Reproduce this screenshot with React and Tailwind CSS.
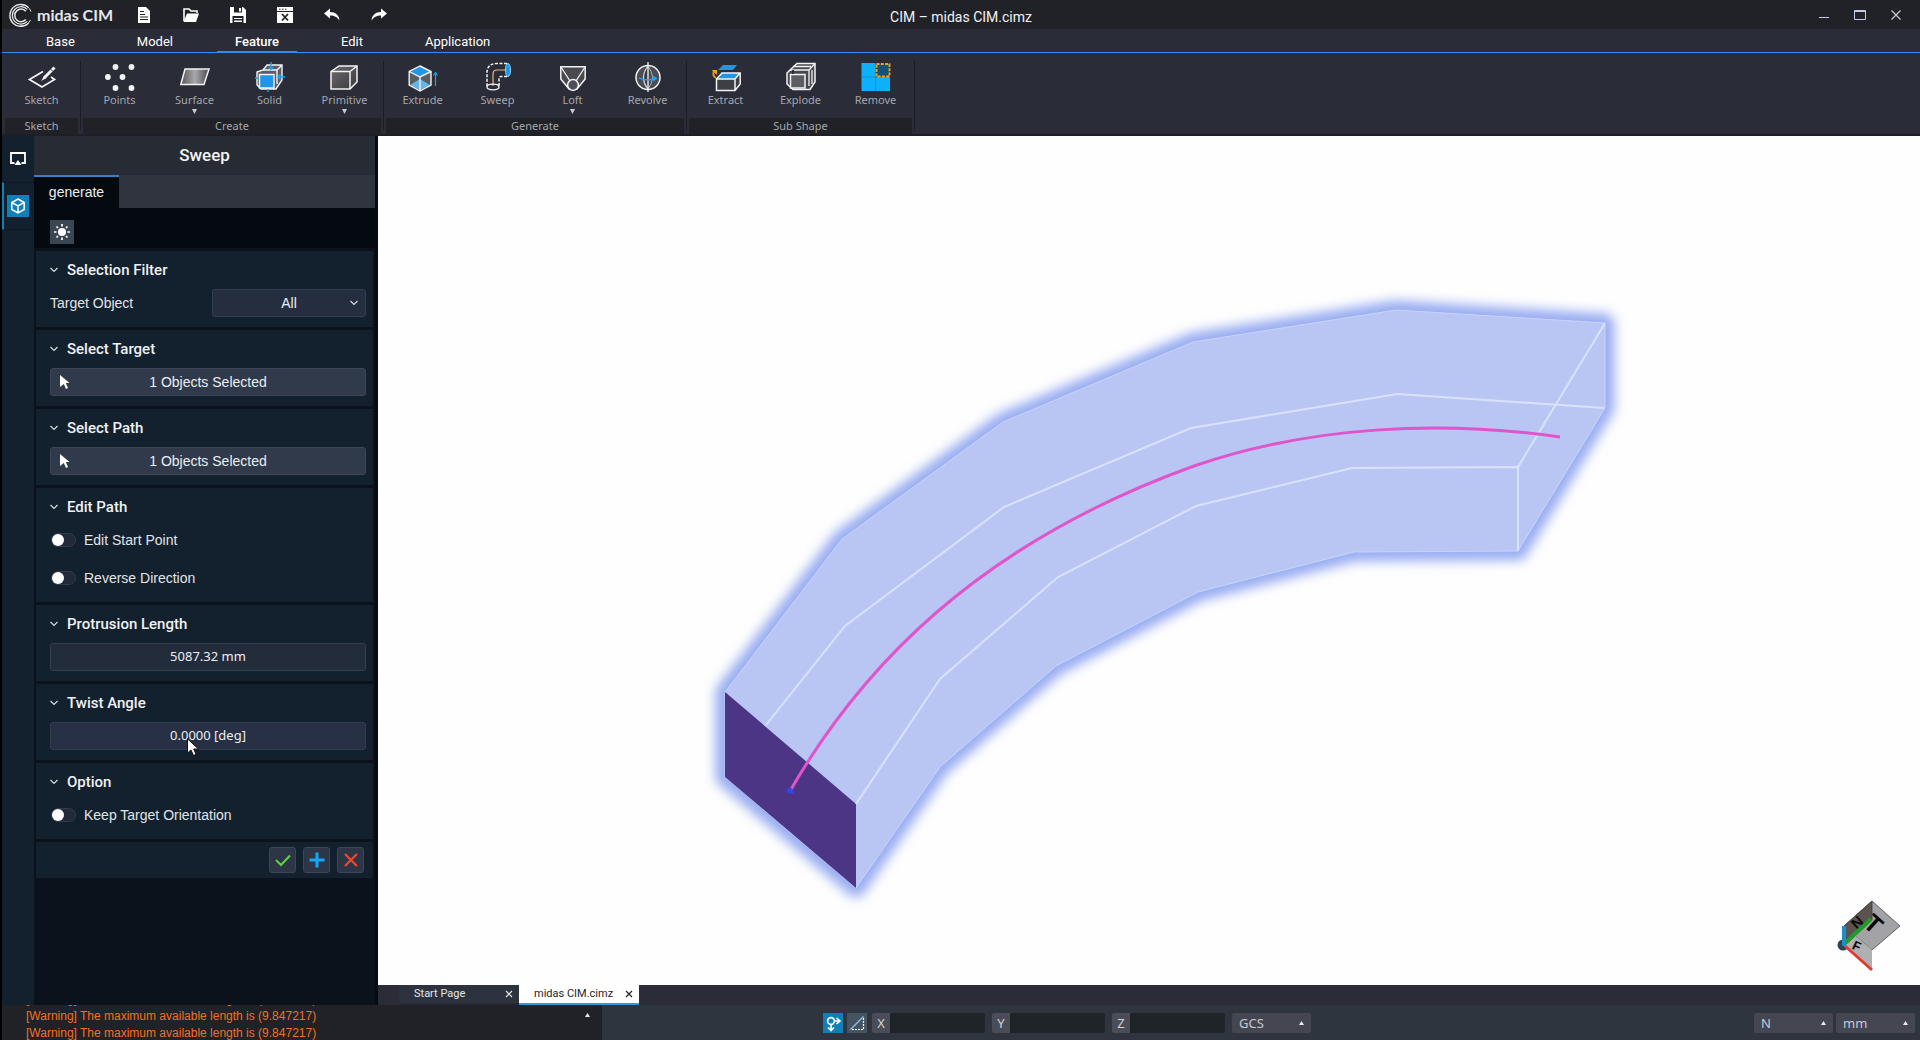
import React, { useState } from "react";

const SANS = "font-['Roboto','Liberation_Sans',sans-serif]";
const BODY = "font-['Liberation_Sans',sans-serif]";
const NOTO = "font-['Noto_Sans','Liberation_Sans',sans-serif]";

/* ---------- title bar icons ---------- */

const Logo = () => (
  <svg viewBox="0 0 24 24" className="w-6 h-6" fill="none" stroke="#e4e6ea" aria-hidden="true">
    <path d="M19.6 4.6A11 11 0 1 0 19.6 20.2" strokeWidth="1.3" />
    <path d="M18.3 6.4A8.7 8.7 0 1 0 18.3 18.4" strokeWidth="1.3" />
    <path d="M22 8.5A10.5 10.5 0 0 0 12 1.8" strokeWidth="1" />
    <path d="M16.8 8.2A6.3 6.3 0 1 0 16.8 16.6" strokeWidth="1.5" />
    <path d="M21.5 17A11 11 0 0 1 11 23" strokeWidth="1" />
  </svg>
);

const NewIcon = () => (
  <svg viewBox="0 0 16 16" className="w-4 h-4" aria-hidden="true">
    <path d="M2 0H10L14 4V16H2Z" fill="#fff" />
    <path d="M4 4.5H8M4 7.5H9M4 10H12M4 12.5H12" stroke="#202227" />
  </svg>
);

const OpenIcon = () => (
  <svg viewBox="0 0 16 16" className="w-4 h-4" aria-hidden="true">
    <path d="M1 14V2H6L8 4H14V6" fill="none" stroke="#fff" strokeWidth="1.6" />
    <path d="M4 6.5H16L13 15H0.5Z" fill="#fff" />
  </svg>
);

const SaveIcon = () => (
  <svg viewBox="0 0 16 16" className="w-4 h-4" aria-hidden="true">
    <path d="M0 0H13L16 3V16H0Z" fill="#fff" />
    <path d="M4 0H12V5.500H4ZM2.500 9H13.500V16H2.500Z" fill="#202227" />
    <path d="M9 1H11V4.500H9ZM4 11H12V12H4ZM4 13.500H12V15H4Z" fill="#fff" />
  </svg>
);

const CloseFileIcon = () => (
  <svg viewBox="0 0 16 16" className="w-4 h-4" aria-hidden="true">
    <path d="M0 0H16V16H0Z" fill="#fff" />
    <path d="M0 4.500H16M2 2.200H3.500M5 2.200H6.500M8 2.200H9.500" stroke="#202227" />
    <path d="M5 7L11 13.500M11 7L5 13.500" stroke="#202227" strokeWidth="1.8" />
  </svg>
);

const UndoIcon = () => (
  <svg viewBox="0 0 16 16" className="w-4 h-4" fill="#fff" aria-hidden="true">
    <path d="M0 6.500L6 1.500V5C11.500 5 15 8 15.500 13.500C13 10 10.500 8.600 6 8.600V11.500Z" />
  </svg>
);

const RedoIcon = () => (
  <svg viewBox="0 0 16 16" className="w-4 h-4" fill="#fff" aria-hidden="true">
    <path d="M16 6.500L10 1.500V5C4.500 5 1 8 0.500 13.500C3 10 5.500 8.600 10 8.600V11.500Z" />
  </svg>
);

/* ---------- ribbon icons, all on a 30x30 grid ---------- */

const RibbonSvg = ({ children }) => (
  <svg viewBox="0 0 30 30" className="w-[30px] h-[30px] shrink-0" fill="none" aria-hidden="true">
    {children}
  </svg>
);

const SketchIcon = () => (
  <RibbonSvg>
    <path d="M16 9.500L2.500 17.500L15 25L27.500 17.500L24 15" stroke="#f2f3f5" strokeWidth="1.800" />
    <path d="M27.500 5.500L17 16" stroke="#f2f3f5" strokeWidth="3" />
    <path d="M17.500 13.500L14 19L19.500 16Z" fill="#f2f3f5" />
    <path d="M23.500 7L26 9.500" stroke="#2a2c37" />
  </RibbonSvg>
);

const PointsIcon = () => (
  <RibbonSvg>
    {[[10.5, 5], [26.5, 5], [2.9, 15], [17.5, 15], [10.5, 26], [26.5, 26]].map(([x, y]) => (
      <circle key={`${x}-${y}`} cx={x} cy={y} r="2.9" fill="#f2f3f5" />
    ))}
  </RibbonSvg>
);

const SurfaceIcon = () => (
  <RibbonSvg>
    <defs>
      <linearGradient id="surface">
        <stop offset="0" stopColor="#55565a" />
        <stop offset="0.5" stopColor="#a9a9ab" />
        <stop offset="1" stopColor="#4a4b50" />
      </linearGradient>
    </defs>
    <path d="M5 7H29L24 22.500H0.800Z" fill="url(#surface)" stroke="#f2f3f5" strokeWidth="1.500" />
  </RibbonSvg>
);

const SolidIcon = () => (
  <RibbonSvg>
    <path d="M8 8L12 3H27V18L21 27H6L2 23V10Z" fill="#5b5d63" stroke="#f2f3f5" strokeWidth="1.400" />
    <path d="M8 8H22L27 3M22 8V22" stroke="#f2f3f5" strokeWidth="1.400" />
    <path d="M4.500 12.500H19V26H4.500Z" fill="#1f96e6" stroke="#f2f3f5" strokeWidth="1.400" />
    <path d="M16 0V7M14 5L16 7.500L18 5M30 15H23M25.500 12.500L23 15L25.500 17.500M0 16H3M13 27V30" stroke="#12a8f5" strokeWidth="1.300" />
  </RibbonSvg>
);

const PrimitiveIcon = () => (
  <RibbonSvg>
    <defs>
      <linearGradient id="prim" x1="0" y1="0" x2="1" y2="1">
        <stop offset="0" stopColor="#6d6d70" />
        <stop offset="1" stopColor="#38383d" />
      </linearGradient>
    </defs>
    <path d="M1 9.500L9 4H27V20L20 27H1Z" fill="url(#prim)" stroke="#f2f3f5" strokeWidth="1.500" />
    <path d="M1 9.500H20V27M20 9.500L27 4" stroke="#f2f3f5" strokeWidth="1.500" />
  </RibbonSvg>
);

const ExtrudeIcon = () => (
  <RibbonSvg>
    <path d="M12 4L23 9.500V23L12 29L1.200 23V9.500Z" fill="#595d64" />
    <path d="M12 4L23 9.500L12 15L1.200 9.500Z" fill="#1f96e6" />
    <path d="M12 17L22 23L12 28L2 23Z" fill="#63b5ea" />
    <path d="M12 4L23 9.500V23L12 29L1.200 23V9.500ZM1.200 9.500L12 15L23 9.500M12 15V29" stroke="#f2f3f5" strokeWidth="1.400" />
    <path d="M27.500 24V11M25.500 13.500L27.500 10.500L29.500 13.500" stroke="#12a8f5" strokeWidth="1.200" />
  </RibbonSvg>
);

const SweepIcon = () => (
  <RibbonSvg>
    <path d="M24 1.500H14Q4 1.500 4 11V25M24 14.500H18Q16 14.500 16 17V25" stroke="#f2f3f5" strokeWidth="1.500" strokeDasharray="3 1.500" />
    <path d="M10 24V12Q10 8 14 8H23" stroke="#e9b77c" strokeWidth="1.200" />
    <ellipse cx="25" cy="8" rx="2.600" ry="6.500" fill="#1f96e6" stroke="#8fd0f8" />
    <ellipse cx="10" cy="25" rx="6" ry="2.800" stroke="#f2f3f5" strokeWidth="1.300" />
  </RibbonSvg>
);

const LoftIcon = () => (
  <RibbonSvg>
    <path d="M2.800 4.800H27.200V17L19 27H11L2.800 17Z" fill="#4a4a4e" stroke="#f2f3f5" strokeWidth="1.500" />
    <path d="M3 5L12 19M27 5L18 19" stroke="#f2f3f5" strokeWidth="1.300" />
    <circle cx="15" cy="23" r="5.400" fill="#4c4f57" stroke="#f2f3f5" strokeWidth="1.500" />
  </RibbonSvg>
);

const RevolveIcon = () => (
  <RibbonSvg>
    <circle cx="15" cy="15.500" r="12" fill="#4a4d55" stroke="#f2f3f5" strokeWidth="1.500" />
    <path d="M15 4Q6 15.500 15 27" fill="#3a3c44" stroke="#d5d7db" strokeWidth="1.200" />
    <path d="M15 4Q24 15.500 15 27" stroke="#a8abb1" />
    <path d="M15 0V30" stroke="#f2f3f5" strokeWidth="1.300" />
    <path d="M6 16Q12 19 22 17" stroke="#12a8f5" strokeWidth="1.300" />
    <path d="M20 13.500L24.500 16.500L20.500 19.500Z" fill="#12a8f5" />
  </RibbonSvg>
);

const ExtractIcon = () => (
  <RibbonSvg>
    <path d="M12 3H26L22 8H7Z" fill="#1f96e6" />
    <path d="M5.500 17L11 11H29.500V22L24 28.500H5.500Z" fill="#3e3f45" />
    <path d="M11 11H29L24 17H6Z" fill="#1f96e6" />
    <path d="M5.500 17L11 11H29.200V22L24 28.500H5.500ZM5.500 17H24V28.500M24 17L29 11" stroke="#f2f3f5" strokeWidth="1.500" />
    <path d="M5 16Q1 14 3 9" stroke="#f5a11c" strokeWidth="1.700" />
    <path d="M0.500 8H6V13Z" fill="#f5a11c" />
  </RibbonSvg>
);

const ExplodeIcon = () => (
  <RibbonSvg>
    <path d="M4 8L11 1.500H29V20L24 27.500H7L1 22V11Z" fill="#46484f" stroke="#f2f3f5" strokeWidth="1.500" />
    <path d="M4 8H23L29 1.500M23 8V24M26 8V22M7 4.500H25" stroke="#f2f3f5" strokeWidth="1.300" />
    <path d="M4.500 12.500H19V26H4.500Z" fill="#5c5e64" stroke="#f2f3f5" strokeWidth="1.500" />
    <path d="M7 8V12" stroke="#2a2c37" strokeWidth="2" />
  </RibbonSvg>
);

const RemoveIcon = () => (
  <RibbonSvg>
    <path d="M0.500 1H14.500V29H0.500ZM14.500 15H29V29H14.500Z" fill="#0cb0fb" />
    <path d="M0.500 15H29M14.500 15V29" stroke="#1790dc" />
    <path d="M15.500 2H28.500V14.500H15.500Z" fill="#175272" stroke="#f5a11c" strokeWidth="1.900" strokeDasharray="3 1.300" />
  </RibbonSvg>
);

const ribbonGroups = [
  { name: "Sketch", items: [{ label: "Sketch", icon: SketchIcon }] },
  {
    name: "Create",
    items: [
      { label: "Points", icon: PointsIcon },
      { label: "Surface", icon: SurfaceIcon, more: true },
      { label: "Solid", icon: SolidIcon },
      { label: "Primitive", icon: PrimitiveIcon, more: true },
    ],
  },
  {
    name: "Generate",
    items: [
      { label: "Extrude", icon: ExtrudeIcon },
      { label: "Sweep", icon: SweepIcon },
      { label: "Loft", icon: LoftIcon, more: true },
      { label: "Revolve", icon: RevolveIcon },
    ],
  },
  {
    name: "Sub Shape",
    items: [
      { label: "Extract", icon: ExtractIcon },
      { label: "Explode", icon: ExplodeIcon },
      { label: "Remove", icon: RemoveIcon },
    ],
  },
];

const quickActions = [
  { label: "New", icon: NewIcon },
  { label: "Open", icon: OpenIcon },
  { label: "Save", icon: SaveIcon },
  { label: "Close file", icon: CloseFileIcon },
  { label: "Undo", icon: UndoIcon },
  { label: "Redo", icon: RedoIcon },
];

const TitleBar = () => (
  <header className="grid grid-cols-[1fr_auto_1fr] items-center h-[29px] bg-[#202227]">
    <div className="flex items-center">
      <div className="flex items-center gap-1 pl-[7px] w-[118px]">
        <Logo />
        <span className="font-['Lato','Liberation_Sans',sans-serif] font-bold text-base leading-6 text-[#e4e6ea] whitespace-nowrap">midas CIM</span>
      </div>
      {quickActions.map(({ label, icon: Icon }) => (
        <button key={label} aria-label={label} className="w-[47px] h-7 flex items-center justify-center">
          <Icon />
        </button>
      ))}
    </div>
    <h1 className="text-sm text-[#f0f1f3] pt-1">CIM – midas CIM.cimz</h1>
    <div className="flex justify-end pr-[6px]">
      <button aria-label="Minimize" className="w-9 h-7 flex items-center justify-center">
        <svg viewBox="0 0 12 12" className="w-3 h-3" stroke="#c3cbe8"><path d="M1 8.500H11" /></svg>
      </button>
      <button aria-label="Maximize" className="w-9 h-7 flex items-center justify-center">
        <svg viewBox="0 0 12 12" className="w-3 h-3" stroke="#c3cbe8" fill="none"><path d="M0.500 1.500H11.500V10.500H0.500ZM0 2.500H12" /></svg>
      </button>
      <button aria-label="Close" className="w-9 h-7 flex items-center justify-center">
        <svg viewBox="0 0 12 12" className="w-3 h-3" stroke="#c5c7cc" strokeWidth="1.300"><path d="M1.500 1.500L10.500 10.500M10.500 1.500L1.500 10.500" /></svg>
      </button>
    </div>
  </header>
);

const menuTabs = ["Base", "Model", "Feature", "Edit", "Application"];

const MenuTabs = ({ active, onSelect }) => (
  <nav className="flex gap-[26px] h-6 pl-[26px] border-b border-[#2f8cf0] bg-[#2a2c37]">
    {menuTabs.map((tab) => (
      <button
        key={tab}
        onClick={() => onSelect(tab)}
        className={`px-[18px] pt-1 text-[13px] leading-[18px] text-white border-b ${
          tab === active ? "font-medium border-[#2f8cf0]" : "border-transparent"
        }`}
      >
        {tab}
      </button>
    ))}
  </nav>
);

const Ribbon = () => (
  <div className={`flex h-[83px] pl-[2px] bg-[#2a2c37] border-b-2 border-[#1d1e27] ${NOTO}`}>
    {ribbonGroups.map((group) => (
      <section key={group.name} aria-label={group.name} className="flex">
        <div className="flex flex-col">
          <div className="flex h-[65px] pt-[9px]">
            {group.items.map(({ label, icon: Icon, more }) => (
              <button key={label} className="flex flex-col items-center w-[75px]">
                <Icon />
                <span className="text-[11px] leading-4 text-[#a4a6ad]">{label}</span>
                {more && <svg viewBox="0 0 5 5" className="w-[5px] h-[5px] mt-px" fill="#c9cbd0"><path d="M0 0H5L2.500 5Z" /></svg>}
              </button>
            ))}
          </div>
          <div className="mx-px bg-[#202227] text-center text-[11px] leading-4 text-[#a4a6ad]">{group.name}</div>
        </div>
        <span className="w-px mx-px mt-2 mb-1 bg-[#1b1c25]" />
      </section>
    ))}
  </div>
);

/* ---------- left side ---------- */

const SideRail = () => (
  <nav className="w-8 shrink-0 bg-[#13202d] flex flex-col">
    <button aria-label="View" className="h-[46px] flex items-center justify-center">
      <svg viewBox="0 0 16 16" className="w-4 h-4" fill="none" aria-hidden="true">
        <path d="M4.500 12H1V2H15V12H11.500" stroke="#fff" strokeWidth="1.800" />
        <path d="M8 9L11.500 14H4.500Z" fill="#fff" />
      </svg>
    </button>
    <button aria-label="Model" className="h-12 flex items-center pl-[3px] border-y border-y-[#0f1822] border-l-2 border-l-[#1180b8]">
      <span className="w-[22px] h-[22px] bg-[#1180b8] flex items-center justify-center">
        <svg viewBox="0 0 16 16" className="w-4 h-4" fill="none" stroke="#fff" strokeWidth="1.500" aria-hidden="true">
          <path d="M8 1L14.200 4.500V11.500L8 15L1.800 11.500V4.500ZM1.800 4.500L8 8L14.200 4.500M8 8V15" />
        </svg>
      </span>
    </button>
  </nav>
);

const Chevron = () => (
  <svg viewBox="0 0 8 8" className="w-2 h-2" fill="none" stroke="#d7dade" strokeWidth="1.200" aria-hidden="true">
    <path d="M0.500 2L4 5.500L7.500 2" />
  </svg>
);

const Section = ({ title, children }) => {
  const [open, setOpen] = useState(true);
  return (
    <section className="bg-[#13202d] pl-[14px] pr-[7px] pb-[10px]">
      <h3 className={`h-[38px] flex ${SANS}`}>
        <button onClick={() => setOpen(!open)} aria-expanded={open} className="flex items-center gap-[9px] text-[15px] font-medium text-[#f0f1f3]">
          <Chevron />
          {title}
        </button>
      </h3>
      {open && children}
    </section>
  );
};

const PickButton = ({ children }) => (
  <button className="relative block w-full h-7 rounded-[3px] border border-[#3c4658] bg-[#303a4a] text-sm text-[#eceef1]">
    <svg viewBox="0 0 10 15" className="absolute left-[9px] top-[6px] w-[10px] h-[15px]" fill="#fff" aria-hidden="true">
      <path d="M0 0L9.500 8H5.800L8 13L6 14L3.800 9L0 12Z" />
    </svg>
    {children}
  </button>
);

const Toggle = ({ label }) => (
  <label className="flex items-center gap-2 h-7 pl-px text-sm text-[#e2e4e8]">
    <input
      type="checkbox"
      className="appearance-none w-[25px] h-[14px] rounded-full border border-[#333c4e] bg-[#222a3a] before:block before:w-3 before:h-3 before:rounded-full before:bg-white checked:before:ml-[11px]"
    />
    {label}
  </label>
);

const valueBox = "block w-full h-7 rounded-[3px] border border-[#343e50] text-center text-[#eceef1]";

const SweepPanel = () => (
  <aside className={`w-[341px] shrink-0 bg-[#0b121c] flex flex-col ${BODY}`}>
    <h2 className={`h-[39px] bg-[#262b34] text-center text-[17px] leading-[39px] font-medium text-[#f4f5f6] ${SANS}`}>Sweep</h2>
    <div className="h-[33px] bg-[#2f343f] flex">
      <button className="w-[85px] pb-px border-t-2 border-[#3b7fc8] bg-[#040a10] text-sm text-[#eceef1]">generate</button>
    </div>
    <div className="h-10 bg-[#040a10] pl-4 pt-3">
      <button aria-label="Highlight" className="w-6 h-6 bg-[#3a4752] flex items-center justify-center">
        <svg viewBox="0 0 16 16" className="w-4 h-4" aria-hidden="true">
          <circle cx="8" cy="8" r="4" fill="#fff" />
          <path d="M8 0V2.500M8 13.500V16M0 8H2.500M13.500 8H16M2.500 2.500L4 4M12 12L13.500 13.500M13.500 2.500L12 4M4 12L2.500 13.500" stroke="#fff" strokeWidth="1.700" />
        </svg>
      </button>
    </div>
    <div className="flex flex-col gap-[3px] pt-[3px] px-[2px]">
      <Section title="Selection Filter">
        <div className="flex items-center justify-between text-sm text-[#e2e4e8]">
          <label htmlFor="target-object">Target Object</label>
          <div className="relative w-[154px]">
            <select id="target-object" className={`${valueBox} appearance-none bg-[#252e3e]`}>
              <option>All</option>
              <option>Solid</option>
              <option>Face</option>
            </select>
            <span className="absolute right-2 top-[10px] pointer-events-none"><Chevron /></span>
          </div>
        </div>
      </Section>
      <Section title="Select Target"><PickButton>1 Objects Selected</PickButton></Section>
      <Section title="Select Path"><PickButton>1 Objects Selected</PickButton></Section>
      <Section title="Edit Path">
        <div className="flex flex-col gap-[10px]">
          <Toggle label="Edit Start Point" />
          <Toggle label="Reverse Direction" />
        </div>
      </Section>
      <Section title="Protrusion Length">
        <input aria-label="Protrusion Length" defaultValue="5087.32 mm" className={`${valueBox} pb-[2px] text-[13px] bg-[#232c3b] ${NOTO}`} />
      </Section>
      <Section title="Twist Angle">
        <div className="relative">
          <input aria-label="Twist Angle" defaultValue="0.0000 [deg]" className={`${valueBox} pb-[2px] text-[13px] bg-[#273044] ${NOTO}`} />
          <svg viewBox="0 0 12 18" className="absolute left-[137px] top-4 w-3 h-[18px]" aria-hidden="true">
            <path d="M0.500 0.800V15L4 12L6.500 17.500L9 16.300L6.700 11H11.500Z" fill="#fff" stroke="#111" />
          </svg>
        </div>
      </Section>
      <Section title="Option"><Toggle label="Keep Target Orientation" /></Section>
      <div className="h-9 bg-[#13202d] flex items-center justify-end gap-[7px] pr-[9px]">
        <button aria-label="OK" className="w-[27px] h-[26px] rounded-[3px] border border-[#3c4658] bg-[#2d3647] flex items-center justify-center">
          <svg viewBox="0 0 16 16" className="w-4 h-4" fill="none" stroke="#5fd33c" strokeWidth="2"><path d="M1 8L6 13L15 3.500" /></svg>
        </button>
        <button aria-label="Apply" className="w-[27px] h-[26px] rounded-[3px] border border-[#3c4658] bg-[#2d3647] flex items-center justify-center">
          <svg viewBox="0 0 16 16" className="w-4 h-4" stroke="#12a8f5" strokeWidth="3"><path d="M8 0.500V15.500M0.500 8H15.500" /></svg>
        </button>
        <button aria-label="Cancel" className="w-[27px] h-[26px] rounded-[3px] border border-[#3c4658] bg-[#2d3647] flex items-center justify-center">
          <svg viewBox="0 0 16 16" className="w-4 h-4" stroke="#f0492a" strokeWidth="2.200"><path d="M2 2L14 14M14 2L2 14" /></svg>
        </button>
      </div>
    </div>
  </aside>
);

/* ---------- 3D view ---------- */

const outline =
  "M725 692L842 539L1003 422L1193 342L1396 310L1605 323V408L1518 551L1354 552L1198 592L1056 666L940 767L856 888L725 777Z";

const Viewport = () => (
  <svg viewBox="378 136 1542 849" className="block w-full h-full" role="img" aria-label="Sweep preview">
    <defs>
      <filter id="glow" x="-10%" y="-10%" width="120%" height="120%">
        <feGaussianBlur stdDeviation="6" />
      </filter>
    </defs>
    <path d={outline} fill="#a9b9f3" stroke="#98acf2" strokeWidth="19" strokeLinejoin="round" filter="url(#glow)" />
    <path d={outline} fill="#b9c6f4" stroke="#c9d4fa" />
    <path d="M725 692L856 804V888L725 777Z" fill="#4d3585" />
    <g fill="none" stroke="#d9e2fd" strokeWidth="2">
      <path d="M766 725L845 626L1004 507L1191 428L1397 394L1604 408" />
      <path d="M856 804L940 679L1058 577L1196 506L1352 468L1518 467V551" />
      <path d="M1605 323L1518 467" />
    </g>
    <path d="M790 791C860 670 975 545 1194 466C1310 426 1440 420 1560 437" fill="none" stroke="#df55cb" strokeWidth="3" />
    <path d="M787 789L793 793M788 793L791 788" stroke="#2d48f0" strokeWidth="3" />

    {/* view cube */}
    <g>
      <circle cx="1843" cy="945" r="5.500" fill="#2f4356" />
      <path d="M1872 901L1900 926L1872 950L1844 926Z" fill="#a3a3a5" stroke="#44464c" strokeWidth="0.800" />
      <path d="M1844 926L1872 950V970L1844 946Z" fill="#b0b0b2" />
      <path d="M1844 926L1872 901V920L1845 945Z" fill="#5b5350" stroke="#3a3c42" strokeWidth="0.800" />
      <g fill="#0a0a0a" className="font-['Liberation_Sans',sans-serif] font-bold">
        <text x="1866" y="933" fontSize="25" transform="rotate(42 1874 924)">T</text>
        <text x="1852" y="928" fontSize="15" transform="rotate(-42 1857 923)">N</text>
        <text x="1853" y="951" fontSize="13" transform="rotate(25 1858 946)">F</text>
      </g>
      <path d="M1844 944L1871 919" stroke="#1f9d2c" strokeWidth="4" />
      <path d="M1845 946L1872 970" stroke="#dc3d30" strokeWidth="3" />
      <path d="M1844 926V946" stroke="#1b8fcb" strokeWidth="4" />
    </g>
  </svg>
);

const DocTab = ({ label, active }) => (
  <div
    className={`flex items-center w-[120px] pl-[15px] pr-[6px] text-[11px] border-b-2 ${
      active ? "bg-white text-[#22242c] border-[#2f9bd6]" : "bg-[#2d333e] text-[#e4e6ea] border-[#262933]"
    }`}
  >
    <button className="flex-1 text-left whitespace-nowrap">{label}</button>
    <button aria-label={`Close ${label}`} className="w-2">
      <svg viewBox="0 0 8 8" className="w-2 h-2" stroke="currentColor" strokeWidth="1.200"><path d="M1 1L7 7M7 1L1 7" /></svg>
    </button>
  </div>
);

/* ---------- status bar ---------- */

const logLines = [
  "[Warning] The maximum available length is (9.847217)",
  "[Warning] The maximum available length is (9.847217)",
  "[Warning] The maximum available length is (9.847217)",
];

const UpArrow = ({ className }) => (
  <svg viewBox="0 0 5 4" className={`w-[5px] h-1 ${className}`} fill="#e8eaee" aria-hidden="true"><path d="M2.500 0L5 4H0Z" /></svg>
);

const AxisInput = ({ axis }) => (
  <label className="flex w-[113px] h-5 rounded-[2px] overflow-hidden mr-[7px]">
    <span className="w-[18px] shrink-0 bg-[#4a4d58] text-center text-[13px] leading-5 text-[#d2d4d9]">{axis}</span>
    <input className="w-full min-w-0 bg-[#1f2429] px-1 text-xs text-white" />
  </label>
);

const UnitSelect = ({ label, value }) => (
  <div className="relative w-[79px]">
    <select aria-label={label} className="appearance-none block w-full h-5 rounded-[2px] bg-[#444652] pl-[7px] text-[13px] leading-5 text-[#c5cad3]">
      <option>{value}</option>
    </select>
    <UpArrow className="absolute right-[7px] top-2 pointer-events-none" />
  </div>
);

const StatusBar = () => (
  <footer className={`flex h-[35px] bg-[#2e353f] ${NOTO}`}>
    <div className={`relative w-[600px] shrink-0 h-full overflow-hidden bg-[#202227] flex flex-col justify-end pl-6 text-xs leading-[17px] text-[#f0701f] ${BODY}`}>
      <div className="-mb-0.5">
        {logLines.map((line, i) => (
          <p key={i}>{line}</p>
        ))}
      </div>
      <button aria-label="Expand log" className="absolute right-3 top-2"><UpArrow className="block" /></button>
    </div>
    <div className="flex flex-1 items-start pt-2 pl-[221px] pr-[5px]">
      <button aria-label="Snap" className="w-5 h-5 bg-[#1180b8] flex items-center justify-center mr-1">
        <svg viewBox="0 0 18 18" className="w-[18px] h-[18px]" fill="none" stroke="#fff" strokeWidth="1.600">
          <circle cx="7" cy="7" r="3.400" />
          <path d="M7 10.500V16M4 13.500L7 16.500L10 13.500M10.500 7H15M12.500 4L16 7L12.500 10" />
        </svg>
      </button>
      <button aria-label="Plane" className="w-5 h-5 bg-[#465461] flex items-center justify-center mr-[5px]">
        <svg viewBox="0 0 16 16" className="w-4 h-4" fill="none">
          <path d="M1.500 14.500L14.500 1.500" stroke="#8fc3f5" strokeWidth="1.300" />
          <path d="M14.500 3V14.500H2" stroke="#fff" strokeWidth="1.200" strokeDasharray="2 1" />
        </svg>
      </button>
      <AxisInput axis="X" />
      <AxisInput axis="Y" />
      <AxisInput axis="Z" />
      <UnitSelect label="Coordinate system" value="GCS" />
      <div className="flex gap-[3px] ml-auto">
        <UnitSelect label="Force unit" value="N" />
        <UnitSelect label="Length unit" value="mm" />
      </div>
    </div>
  </footer>
);

const App = () => {
  const [activeTab, setActiveTab] = useState("Feature");

  return (
    <div className={`h-screen flex flex-col border-l-2 border-black bg-[#2a2c37] overflow-hidden ${SANS}`}>
      <TitleBar />
      <MenuTabs active={activeTab} onSelect={setActiveTab} />
      <Ribbon />
      <div className="flex flex-1 min-h-0">
        <SideRail />
        <SweepPanel />
        <main className="flex flex-col flex-1 min-w-0 border-l-3 border-[#060a12]">
          <div className="flex-1 min-h-0 bg-[#fefefe]">
            <Viewport />
          </div>
          <div className="flex h-5 pl-[21px] bg-[#2a2c37]">
            <DocTab label="Start Page" />
            <DocTab label="midas CIM.cimz" active />
          </div>
        </main>
      </div>
      <StatusBar />
    </div>
  );
};

export default App;
